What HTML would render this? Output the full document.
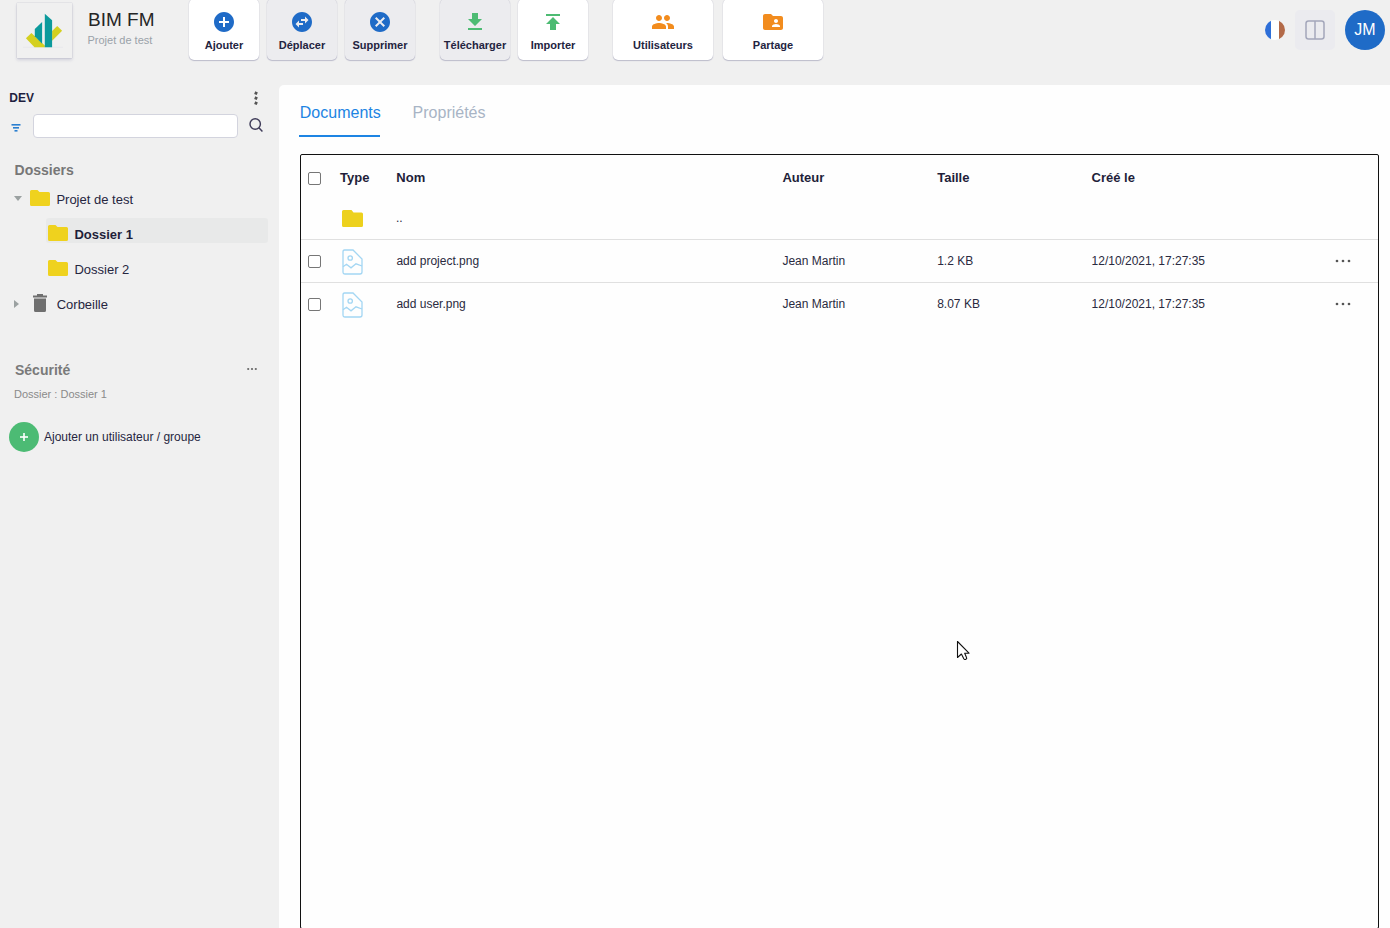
<!DOCTYPE html>
<html><head><meta charset="utf-8">
<style>
*{box-sizing:border-box;margin:0;padding:0}
html,body{width:1390px;height:928px;overflow:hidden;background:#f0f0f0;font-family:"Liberation Sans",sans-serif;color:#26263f}
.a{position:absolute;line-height:1;white-space:nowrap}
.btn{position:absolute;top:-1px;height:61px;border-radius:5px;background:#fff;box-shadow:0 1px 1px rgba(70,70,120,.28),0 0 1px rgba(70,70,120,.3)}
.btn.dis{background:#ececef}
.btn svg{position:absolute;left:50%;margin-left:-12px;top:11px;width:24px;height:24px}
.btn span{position:absolute;left:0;right:0;text-align:center;top:40.7px;font-size:11px;font-weight:bold;line-height:1;color:#24243f}
.fold{position:absolute;width:20px;height:16px}
.cb{position:absolute;width:13px;height:13px;border:1px solid #767676;border-radius:2px;background:#fff}
.th{font-size:13px;font-weight:bold;color:#1f1f3a}
.td{font-size:12px;color:#2a2a40}
.hl{position:absolute;height:1px;background:#e0e0e0;left:301px;width:1077px}
</style></head><body>

<!-- logo -->
<div class="a" style="left:17px;top:3px;width:55px;height:55px;background:#f0f0f0;box-shadow:0 0 1px rgba(90,90,140,.45),0 2px 3px rgba(90,90,140,.22)">
<svg width="55" height="55" viewBox="17 3 55 55" style="position:absolute;left:0;top:0">
<line x1="23" y1="47.3" x2="63" y2="47.3" stroke="#e4e4ea" stroke-width=".6"/>
<polygon points="25.9,38.3 31.4,33.1 44.8,45.5 44.8,47.2 34.5,47.2" fill="#d4d020"/>
<polygon points="52.1,31 57.2,25.9 62.1,30.7 52.1,40.7" fill="#d4d020"/>
<polygon points="44.8,13.8 52.1,20.3 52.1,47.2 44.8,47.2" fill="#0c9a9c"/>
<polygon points="42.1,22 42.1,43.8 34.8,36.3 34.8,29" fill="#0c9a9c"/>
</svg>
</div>
<div class="a" style="left:88px;top:9.9px;font-size:19px;color:#262626">BIM FM</div>
<div class="a" style="left:87.5px;top:34.7px;font-size:11px;color:#9aa2a9">Projet de test</div>

<!-- toolbar buttons -->
<div class="btn" style="left:189px;width:70px"><svg viewBox="0 0 24 24"><path fill="#1f6bc7" d="M12 2C6.48 2 2 6.48 2 12s4.48 10 10 10 10-4.48 10-10S17.52 2 12 2zm5 11h-4v4h-2v-4H7v-2h4V7h2v4h4v2z"/></svg><span>Ajouter</span></div>
<div class="btn dis" style="left:267px;width:70px"><svg viewBox="0 0 24 24"><path fill="#1f6bc7" d="M22 12c0-5.52-4.48-10-10-10S2 6.48 2 12s4.48 10 10 10 10-4.48 10-10zm-7-5.5l3.5 3.5-3.5 3.5V11h-4V9h4V6.5zm-6 11L5.5 14 9 10.5V13h4v2H9v2.5z"/></svg><span>Déplacer</span></div>
<div class="btn dis" style="left:345px;width:70px"><svg viewBox="0 0 24 24"><path fill="#1f6bc7" d="M12 2C6.47 2 2 6.47 2 12s4.47 10 10 10 10-4.47 10-10S17.53 2 12 2zm5 13.59L15.59 17 12 13.41 8.41 17 7 15.59 10.59 12 7 8.41 8.41 7 12 10.59 15.59 7 17 8.41 13.41 12 17 15.59z"/></svg><span>Supprimer</span></div>
<div class="btn dis" style="left:440px;width:70px"><svg viewBox="0 0 24 24"><path fill="#4dbb73" d="M19 9h-4V3H9v6H5l7 7 7-7zM5 18v2h14v-2H5z"/></svg><span>Télécharger</span></div>
<div class="btn" style="left:518px;width:70px"><svg viewBox="0 0 24 24"><path fill="#4dbb73" d="M5 4v2h14V4H5zm0 10h4v6h6v-6h4l-7-7-7 7z"/></svg><span>Importer</span></div>
<div class="btn" style="left:613px;width:100px"><svg viewBox="0 0 24 24"><path fill="#f28c1e" d="M16 11c1.66 0 2.99-1.34 2.99-3S17.66 5 16 5c-1.66 0-3 1.34-3 3s1.34 3 3 3zm-8 0c1.66 0 2.99-1.34 2.99-3S9.66 5 8 5C6.34 5 5 6.34 5 8s1.34 3 3 3zm0 2c-2.33 0-7 1.170-7 3.5V19h14v-2.5c0-2.33-4.67-3.5-7-3.5zm8 0c-.29 0-.62.02-.97.05 1.16.84 1.97 1.97 1.970 3.45V19h6v-2.5c0-2.33-4.67-3.5-7-3.5z"/></svg><span>Utilisateurs</span></div>
<div class="btn" style="left:723px;width:100px"><svg viewBox="0 0 24 24"><path fill="#f28c1e" d="M20 6h-8l-2-2H4c-1.1 0-1.99.9-1.99 2L2 18c0 1.1.9 2 2 2h16c1.1 0 2-.9 2-2V8c0-1.1-.9-2-2-2zm-5 3c1.1 0 2 .9 2 2s-.9 2-2 2-2-.9-2-2 .9-2 2-2zm4 8h-8v-1c0-1.33 2.67-2 4-2s4 .67 4 2v1z"/></svg><span>Partage</span></div>

<!-- right header -->
<div class="a" style="left:1265px;top:20px;width:20px;height:20px;border-radius:50%;overflow:hidden;background:linear-gradient(90deg,#2e6fd8 0,#2e6fd8 6.5px,#fff 6.5px,#fff 14px,#b36a48 14px)"></div>
<div class="a" style="left:1295px;top:10px;width:40px;height:40px;border-radius:5px;background:#ebebef"></div>
<svg class="a" style="left:1305px;top:20px" width="20" height="20" viewBox="0 0 20 20"><rect x="1" y="1" width="18" height="18" rx="2.5" fill="none" stroke="#a4a7bb" stroke-width="1.5"/><line x1="10" y1="1" x2="10" y2="19" stroke="#a4a7bb" stroke-width="1.5"/></svg>
<div class="a" style="left:1345px;top:10px;width:40px;height:40px;border-radius:50%;background:#1f6bc7"></div>
<div class="a" style="left:1345px;width:40px;text-align:center;top:21.5px;font-size:16px;color:#fff">JM</div>

<!-- sidebar -->
<div class="a" style="left:9.3px;top:91.8px;font-size:12px;font-weight:bold;color:#1f1f3f">DEV</div>
<svg class="a" style="left:250px;top:89px" width="12" height="18" viewBox="0 0 12 18"><g fill="#555"><rect x="4.6" y="2.8" width="2.8" height="2.8" transform="rotate(25 6 4.2)"/><rect x="4.6" y="7.8" width="2.8" height="2.8" transform="rotate(25 6 9.2)"/><rect x="4.6" y="12.8" width="2.8" height="2.8" transform="rotate(25 6 14.2)"/></g></svg>
<svg class="a" style="left:10px;top:122px" width="12" height="12" viewBox="0 0 12 12"><rect x="1.5" y="2" width="9" height="1.6" fill="#2a7fd0"/><rect x="3" y="5" width="6" height="1.6" fill="#2a7fd0"/><rect x="4.5" y="8" width="3" height="1.6" fill="#2a7fd0"/></svg>
<div class="a" style="left:33px;top:114px;width:205px;height:24px;background:#fff;border:1px solid #d3d4de;border-radius:4px"></div>
<svg class="a" style="left:246px;top:115px" width="20" height="20" viewBox="0 0 20 20"><circle cx="9.2" cy="9" r="5.2" fill="none" stroke="#403d5a" stroke-width="1.45"/><line x1="12.9" y1="12.7" x2="16.4" y2="16.4" stroke="#403d5a" stroke-width="1.45"/></svg>

<div class="a" style="left:14.6px;top:162.8px;font-size:14px;font-weight:bold;color:#777">Dossiers</div>
<svg class="a" style="left:13px;top:195px" width="10" height="8" viewBox="0 0 10 8"><polygon points="1,1 9,1 5,6" fill="#9ba1a1"/></svg>
<svg class="fold" style="left:30px;top:190px" viewBox="0 0 20 16"><path d="M0 1.5Q0 0 1.5 0H7.5L9.5 2H18.5Q20 2 20 3.5V14.5Q20 16 18.5 16H1.5Q0 16 0 14.5Z" fill="#efd21e"/></svg>
<div class="a" style="left:56.4px;top:193px;font-size:13px">Projet de test</div>

<div class="a" style="left:46px;top:218px;width:222px;height:25px;background:#e8e9e9;border-radius:3px"></div>
<svg class="fold" style="left:48px;top:225px" viewBox="0 0 20 16"><path d="M0 1.5Q0 0 1.5 0H7.5L9.5 2H18.5Q20 2 20 3.5V14.5Q20 16 18.5 16H1.5Q0 16 0 14.5Z" fill="#efd21e"/></svg>
<div class="a" style="left:74.4px;top:228px;font-size:13px;font-weight:bold;color:#1f1f3a">Dossier 1</div>
<svg class="fold" style="left:48px;top:260px" viewBox="0 0 20 16"><path d="M0 1.5Q0 0 1.5 0H7.5L9.5 2H18.5Q20 2 20 3.5V14.5Q20 16 18.5 16H1.5Q0 16 0 14.5Z" fill="#efd21e"/></svg>
<div class="a" style="left:74.4px;top:263px;font-size:13px">Dossier 2</div>

<svg class="a" style="left:12px;top:298px" width="10" height="12" viewBox="0 0 10 12"><polygon points="2,2 7,6 2,10" fill="#9ba1a1"/></svg>
<svg class="a" style="left:31px;top:293px" width="18" height="20" viewBox="0 0 18 20"><path d="M2 2.5H16V4.5H2Z M6 1H12V2.5H6Z M3 5.5H15V17.5Q15 19 13.5 19H4.5Q3 19 3 17.5Z" fill="#6f6f6f"/></svg>
<div class="a" style="left:56.7px;top:298px;font-size:13px">Corbeille</div>

<div class="a" style="left:15px;top:363.2px;font-size:14px;font-weight:bold;color:#7a7a7a">Sécurité</div>
<svg class="a" style="left:245px;top:365px" width="14" height="8" viewBox="0 0 14 8"><circle cx="3.2" cy="4" r="1.1" fill="#666"/><circle cx="7" cy="4" r="1.1" fill="#666"/><circle cx="10.8" cy="4" r="1.1" fill="#666"/></svg>
<div class="a" style="left:14px;top:388.7px;font-size:11px;color:#8a8a8a">Dossier : Dossier 1</div>
<div class="a" style="left:9px;top:422px;width:30px;height:30px;border-radius:50%;background:#4cbb74"></div>
<svg class="a" style="left:19px;top:432px" width="10" height="10" viewBox="0 0 10 10"><rect x="4.2" y="1" width="1.6" height="8" fill="#fff"/><rect x="1" y="4.2" width="8" height="1.6" fill="#fff"/></svg>
<div class="a" style="left:44px;top:430.8px;font-size:12px">Ajouter un utilisateur / groupe</div>

<!-- main panel -->
<div class="a" style="left:279px;top:85px;width:1111px;height:843px;background:#fefefe;border-top-left-radius:5px"></div>
<div class="a" style="left:299.8px;top:104.5px;font-size:16px;color:#1d84e3">Documents</div>
<div class="a" style="left:299px;top:135px;width:81px;height:2px;background:#1d84e3"></div>
<div class="a" style="left:412.6px;top:104.5px;font-size:16px;color:#a8b4c5">Propriétés</div>

<div class="a" style="left:300px;top:154px;width:1079px;height:775px;border:1px solid #111;border-radius:2px"></div>
<div class="cb" style="left:308px;top:172px"></div>
<div class="a th" style="left:340px;top:170.8px">Type</div>
<div class="a th" style="left:396.3px;top:170.8px">Nom</div>
<div class="a th" style="left:782.4px;top:170.8px">Auteur</div>
<div class="a th" style="left:937.2px;top:170.8px">Taille</div>
<div class="a th" style="left:1091.6px;top:170.8px">Créé le</div>

<svg class="a" style="left:342px;top:210px" width="21" height="17" viewBox="0 0 21 17"><path d="M0 1.5Q0 0 1.5 0H9.5L11.5 2.5H19.5Q21 2.5 21 4V15.5Q21 17 19.5 17H1.5Q0 17 0 15.5Z" fill="#edd11d"/></svg>
<div class="a td" style="left:396px;top:212.3px">..</div>
<div class="hl" style="top:239px"></div>

<div class="cb" style="left:308px;top:255px"></div>
<svg class="a" style="left:342px;top:248.5px" width="21" height="26" viewBox="0 0 21 26"><path d="M2.5 1H11L20 10V23Q20 25 18 25H3Q1 25 1 23V3Q1 1 2.5 1Z" fill="none" stroke="#a3d6f3" stroke-width="1.3"/><circle cx="8.2" cy="9" r="2.2" fill="none" stroke="#a3d6f3" stroke-width="1.3"/><path d="M1 17.8L4.5 15.3L9 18.8L14 14.8L20 17" fill="none" stroke="#a3d6f3" stroke-width="1.3"/></svg>
<div class="a td" style="left:396.4px;top:255.2px">add project.png</div>
<div class="a td" style="left:782.4px;top:255.2px">Jean Martin</div>
<div class="a td" style="left:937.2px;top:255.2px">1.2 KB</div>
<div class="a td" style="left:1091.6px;top:255.2px">12/10/2021, 17:27:35</div>
<svg class="a" style="left:1333px;top:257px" width="20" height="8" viewBox="0 0 20 8"><circle cx="4" cy="4" r="1.35" fill="#555"/><circle cx="10" cy="4" r="1.35" fill="#555"/><circle cx="16" cy="4" r="1.35" fill="#555"/></svg>
<div class="hl" style="top:282px"></div>

<div class="cb" style="left:308px;top:298px"></div>
<svg class="a" style="left:342px;top:291.5px" width="21" height="26" viewBox="0 0 21 26"><path d="M2.5 1H11L20 10V23Q20 25 18 25H3Q1 25 1 23V3Q1 1 2.5 1Z" fill="none" stroke="#a3d6f3" stroke-width="1.3"/><circle cx="8.2" cy="9" r="2.2" fill="none" stroke="#a3d6f3" stroke-width="1.3"/><path d="M1 17.8L4.5 15.3L9 18.8L14 14.8L20 17" fill="none" stroke="#a3d6f3" stroke-width="1.3"/></svg>
<div class="a td" style="left:396.4px;top:298px">add user.png</div>
<div class="a td" style="left:782.4px;top:298px">Jean Martin</div>
<div class="a td" style="left:937.2px;top:298px">8.07 KB</div>
<div class="a td" style="left:1091.6px;top:298px">12/10/2021, 17:27:35</div>
<svg class="a" style="left:1333px;top:300px" width="20" height="8" viewBox="0 0 20 8"><circle cx="4" cy="4" r="1.35" fill="#555"/><circle cx="10" cy="4" r="1.35" fill="#555"/><circle cx="16" cy="4" r="1.35" fill="#555"/></svg>

<!-- cursor -->
<svg class="a" style="left:955px;top:639px" width="18" height="24" viewBox="0 0 18 24"><path d="M2.5 2.5V18.5L6.4 15L8.8 19.8Q9.4 20.8 10.4 20.4L11.2 20Q12 19.5 11.6 18.7L9.7 14.2H14Z" fill="#fff" stroke="#111" stroke-width="1.1" stroke-linejoin="round"/></svg>
</body></html>
